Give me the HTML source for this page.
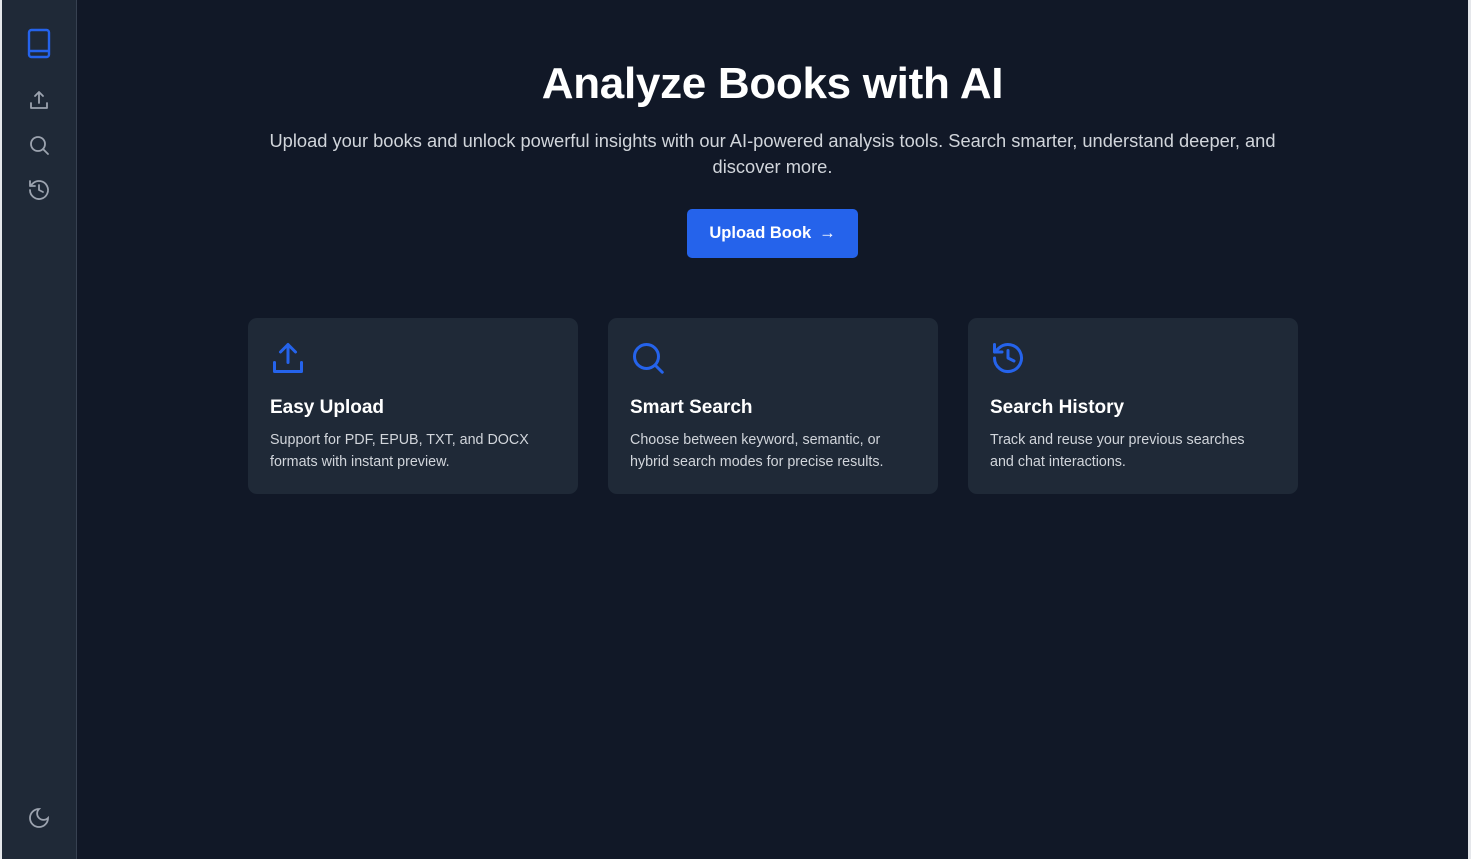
<!DOCTYPE html>
<html><head><meta charset="utf-8"><style>
*{box-sizing:border-box;margin:0;padding:0}
body{width:1471px;height:859px;background:#e5e7eb;font-family:"Liberation Sans",sans-serif;overflow:hidden;position:relative}
.side{position:absolute;left:2px;top:0;width:75px;height:859px;background:#1f2937;border-right:1px solid #374151}
.main{position:absolute;left:77px;top:0;width:1391px;height:859px;background:#111827}
.ic{position:absolute;left:25px}
h1{position:absolute;left:0;width:1391px;top:59px;text-align:center;color:#fff;font-size:44px;font-weight:bold;letter-spacing:-0.3px}
.sub{position:absolute;left:170px;width:1051px;top:128px;text-align:center;color:#d1d5db;font-size:18.3px;line-height:26px}
.btn{position:absolute;left:610px;top:209px;width:171px;height:49px;background:#2563eb;border-radius:5px;color:#fff;font-weight:bold;font-size:16.5px;display:flex;align-items:center;justify-content:center;gap:8px}
.card{position:absolute;top:318px;width:330px;height:176px;background:#1f2937;border-radius:9px;padding:22px}
.card h3{color:#fff;font-size:19px;margin-top:16px;margin-bottom:10px}
.card p{color:#d1d5db;font-size:14.3px;line-height:22px;max-width:272px}
</style></head><body>
<div class="side">
<svg class="ic" style="top:28px" width="26" height="32" viewBox="0 0 26 32" fill="none" stroke="#2563eb" stroke-width="2.4"><rect x="2" y="2" width="20" height="27" rx="2.5"/><path d="M2 23h20"/></svg>
<svg class="ic" style="top:88px" width="24" height="24" viewBox="0 0 24 24" fill="none" stroke="#9ca3af" stroke-width="1.8" stroke-linecap="round" stroke-linejoin="round"><path d="M4 15v5h16v-5M12 15V4M8 8l4-4 4 4"/></svg>
<svg class="ic" style="top:133px" width="24" height="24" viewBox="0 0 24 24" fill="none" stroke="#9ca3af" stroke-width="1.8" stroke-linecap="round"><circle cx="11" cy="11" r="7"/><path d="M16 16l5 5"/></svg>
<svg class="ic" style="top:178px" width="24" height="24" viewBox="0 0 24 24" fill="none" stroke="#9ca3af" stroke-width="1.8" stroke-linecap="round" stroke-linejoin="round"><path d="M3 12a9 9 0 1 0 3-6.7L3 8M3 3v5h5M12 7v5l4 2"/></svg>
<svg class="ic" style="top:806px" width="24" height="24" viewBox="0 0 24 24" fill="none" stroke="#9ca3af" stroke-width="1.8"><path d="M12 3a6 6 0 0 0 9 9 9 9 0 1 1-9-9z"/></svg>
</div>
<div class="main">
<h1>Analyze Books with AI</h1>
<div class="sub">Upload your books and unlock powerful insights with our AI-powered analysis tools. Search smarter, understand deeper, and discover more.</div>
<div class="btn">Upload Book <span style="font-weight:normal">→</span></div>
<div class="card" style="left:171px"><svg width="36" height="36" viewBox="0 0 24 24" fill="none" stroke="#2563eb" stroke-width="2" stroke-linecap="round" stroke-linejoin="round"><path d="M3 15v6h18v-6M12 15V3M7 8l5-5 5 5"/></svg><h3>Easy Upload</h3><p>Support for PDF, EPUB, TXT, and DOCX formats with instant preview.</p></div>
<div class="card" style="left:531px"><svg width="36" height="36" viewBox="0 0 24 24" fill="none" stroke="#2563eb" stroke-width="2" stroke-linecap="round"><circle cx="11" cy="11" r="8"/><path d="M17 17l4.5 4.5"/></svg><h3>Smart Search</h3><p>Choose between keyword, semantic, or hybrid search modes for precise results.</p></div>
<div class="card" style="left:891px"><svg width="36" height="36" viewBox="0 0 24 24" fill="none" stroke="#2563eb" stroke-width="2" stroke-linecap="round" stroke-linejoin="round"><path d="M3 12a9 9 0 1 0 3-6.7L3 8M3 3v5h5M12 7v5l4 2"/></svg><h3>Search History</h3><p>Track and reuse your previous searches and chat interactions.</p></div>
</div>
</body></html>
